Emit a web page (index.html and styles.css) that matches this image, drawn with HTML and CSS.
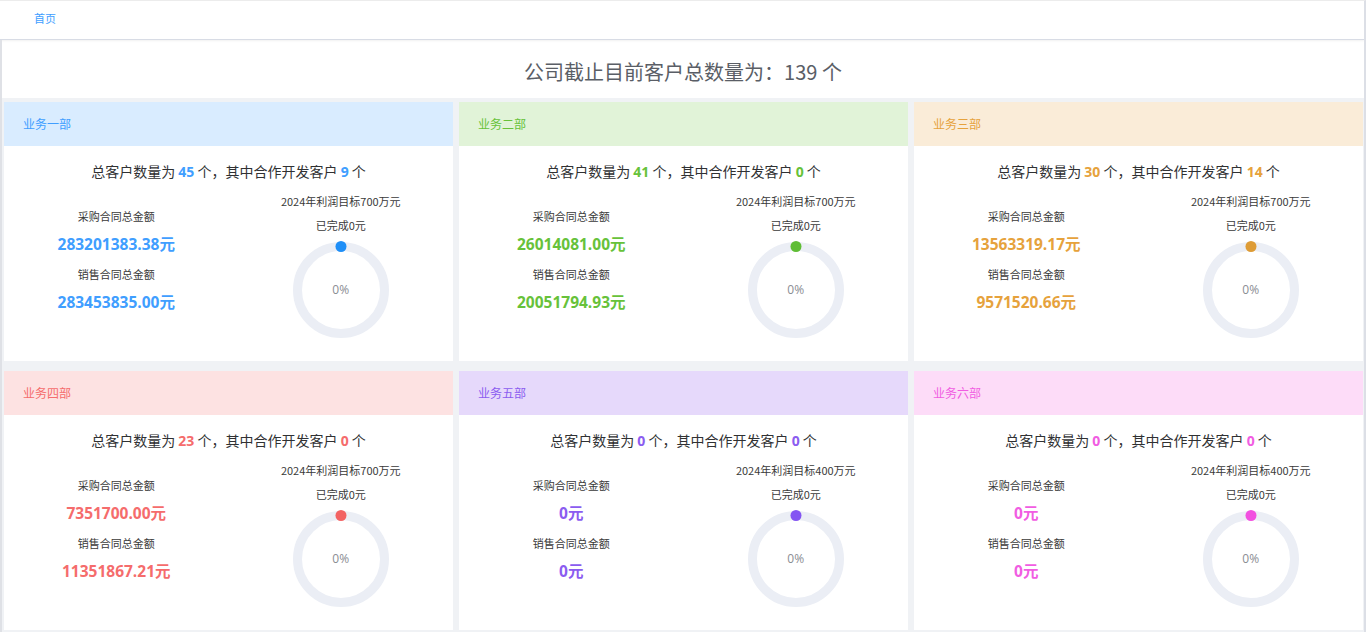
FILE: index.html
```html
<!DOCTYPE html>
<html lang="zh-CN">
<head>
<meta charset="utf-8">
<title>客户统计</title>
<link rel="stylesheet" href="styles.css">
</head>
<body>
<div class="app">
  <div class="topbar"><a class="crumb">首页</a></div>
  <div class="main">
    <div class="title">公司截止目前客户总数量为：139 个</div>
    <div class="grid">
      <div class="card c1">
        <div class="card-head">业务一部</div>
        <div class="card-body">
          <div class="summary">总客户数量为 <b>45</b> 个，其中合作开发客户 <b>9</b> 个</div>
          <div class="stats">
            <div class="amounts">
              <div class="label">采购合同总金额</div>
              <div class="value">283201383.38元</div>
              <div class="label">销售合同总金额</div>
              <div class="value">283453835.00元</div>
            </div>
            <div class="target">
              <div class="label">2024年利润目标700万元</div>
              <div class="label done">已完成0元</div>
              <div class="donut">
                <svg width="98" height="98" viewBox="0 0 98 98"><circle cx="49" cy="49" r="43.5" class="ring"/><circle cx="49" cy="5.5" r="5.5" class="dot"/></svg>
                <span class="pct">0%</span>
              </div>
            </div>
          </div>
        </div>
      </div>
      <div class="card c2">
        <div class="card-head">业务二部</div>
        <div class="card-body">
          <div class="summary">总客户数量为 <b>41</b> 个，其中合作开发客户 <b>0</b> 个</div>
          <div class="stats">
            <div class="amounts">
              <div class="label">采购合同总金额</div>
              <div class="value">26014081.00元</div>
              <div class="label">销售合同总金额</div>
              <div class="value">20051794.93元</div>
            </div>
            <div class="target">
              <div class="label">2024年利润目标700万元</div>
              <div class="label done">已完成0元</div>
              <div class="donut">
                <svg width="98" height="98" viewBox="0 0 98 98"><circle cx="49" cy="49" r="43.5" class="ring"/><circle cx="49" cy="5.5" r="5.5" class="dot"/></svg>
                <span class="pct">0%</span>
              </div>
            </div>
          </div>
        </div>
      </div>
      <div class="card c3">
        <div class="card-head">业务三部</div>
        <div class="card-body">
          <div class="summary">总客户数量为 <b>30</b> 个，其中合作开发客户 <b>14</b> 个</div>
          <div class="stats">
            <div class="amounts">
              <div class="label">采购合同总金额</div>
              <div class="value">13563319.17元</div>
              <div class="label">销售合同总金额</div>
              <div class="value">9571520.66元</div>
            </div>
            <div class="target">
              <div class="label">2024年利润目标700万元</div>
              <div class="label done">已完成0元</div>
              <div class="donut">
                <svg width="98" height="98" viewBox="0 0 98 98"><circle cx="49" cy="49" r="43.5" class="ring"/><circle cx="49" cy="5.5" r="5.5" class="dot"/></svg>
                <span class="pct">0%</span>
              </div>
            </div>
          </div>
        </div>
      </div>
      <div class="card c4">
        <div class="card-head">业务四部</div>
        <div class="card-body">
          <div class="summary">总客户数量为 <b>23</b> 个，其中合作开发客户 <b>0</b> 个</div>
          <div class="stats">
            <div class="amounts">
              <div class="label">采购合同总金额</div>
              <div class="value">7351700.00元</div>
              <div class="label">销售合同总金额</div>
              <div class="value">11351867.21元</div>
            </div>
            <div class="target">
              <div class="label">2024年利润目标700万元</div>
              <div class="label done">已完成0元</div>
              <div class="donut">
                <svg width="98" height="98" viewBox="0 0 98 98"><circle cx="49" cy="49" r="43.5" class="ring"/><circle cx="49" cy="5.5" r="5.5" class="dot"/></svg>
                <span class="pct">0%</span>
              </div>
            </div>
          </div>
        </div>
      </div>
      <div class="card c5">
        <div class="card-head">业务五部</div>
        <div class="card-body">
          <div class="summary">总客户数量为 <b>0</b> 个，其中合作开发客户 <b>0</b> 个</div>
          <div class="stats">
            <div class="amounts">
              <div class="label">采购合同总金额</div>
              <div class="value">0元</div>
              <div class="label">销售合同总金额</div>
              <div class="value">0元</div>
            </div>
            <div class="target">
              <div class="label">2024年利润目标400万元</div>
              <div class="label done">已完成0元</div>
              <div class="donut">
                <svg width="98" height="98" viewBox="0 0 98 98"><circle cx="49" cy="49" r="43.5" class="ring"/><circle cx="49" cy="5.5" r="5.5" class="dot"/></svg>
                <span class="pct">0%</span>
              </div>
            </div>
          </div>
        </div>
      </div>
      <div class="card c6">
        <div class="card-head">业务六部</div>
        <div class="card-body">
          <div class="summary">总客户数量为 <b>0</b> 个，其中合作开发客户 <b>0</b> 个</div>
          <div class="stats">
            <div class="amounts">
              <div class="label">采购合同总金额</div>
              <div class="value">0元</div>
              <div class="label">销售合同总金额</div>
              <div class="value">0元</div>
            </div>
            <div class="target">
              <div class="label">2024年利润目标400万元</div>
              <div class="label done">已完成0元</div>
              <div class="donut">
                <svg width="98" height="98" viewBox="0 0 98 98"><circle cx="49" cy="49" r="43.5" class="ring"/><circle cx="49" cy="5.5" r="5.5" class="dot"/></svg>
                <span class="pct">0%</span>
              </div>
            </div>
          </div>
        </div>
      </div>
    </div>
  </div>
</div>
</body>
</html>
```
FILE: styles.css
```css
* { box-sizing: border-box; }
html, body { margin: 0; padding: 0; background: #ffffff; }
body {
  font-family: "Noto Sans CJK SC", "Noto Sans", sans-serif;
  color: #303133;
  overflow: hidden;
}
.app {
  width: 1366px;
  height: 632px;
  border-right: 2px solid #dcdfe6;
  border-top: 1px solid #ececec;
  overflow: hidden;
}
.topbar {
  height: 39px;
  border-bottom: 1px solid #d8dce5;
  box-shadow: 0 1px 2px rgba(0, 0, 0, 0.06);
  padding-left: 34px;
  display: flex;
  align-items: center;
  padding-bottom: 4px;
}
.crumb {
  font-size: 11px;
  color: #409eff;
  line-height: 16px;
}
.main {
  border-left: 2px solid #dfe1e6;
}
.title {
  height: 58px;
  display: flex;
  align-items: center;
  justify-content: center;
  padding-top: 5px;
  font-size: 20px;
  color: #5a5e66;
  font-family: "Noto Sans CJK SC", sans-serif;
}
.grid {
  background: #f0f2f5;
  padding: 4px 1px 4px 2px;
  display: grid;
  grid-template-columns: repeat(3, 1fr);
  grid-template-rows: 259px 259px;
  column-gap: 6px;
  row-gap: 10px;
}
.card {
  background: #ffffff;
}
.card-head {
  height: 44px;
  line-height: 44px;
  padding-left: 19px;
  font-size: 12px;
}
.card-body {
  padding-top: 15px;
}
.summary {
  text-align: center;
  font-size: 14px;
  line-height: 20px;
  color: #303133;
}
.summary b {
  font-family: "Open Sans", "Noto Sans CJK SC", sans-serif;
  font-weight: 700;
}
.stats {
  display: flex;
  align-items: flex-start;
}
.amounts, .target {
  width: 50%;
  display: flex;
  flex-direction: column;
  align-items: center;
}
.amounts {
  margin-top: 26px;
}
.target {
  margin-top: 11px;
}
.label {
  font-size: 11px;
  line-height: 16px;
  color: #3a3a3a;
}
.amounts .label { margin-bottom: 10px; }
.value {
  font-family: "Open Sans", "Noto Sans CJK SC", sans-serif;
  font-weight: 700;
  font-size: 15.5px;
  line-height: 20px;
  margin-bottom: 12px;
}
.target .label { margin-bottom: 8px; }
.target .done { margin-bottom: 8px; }
.donut {
  position: relative;
  width: 98px;
  height: 98px;
}
.donut svg { display: block; }
.ring {
  fill: none;
  stroke: #ebeef5;
  stroke-width: 9;
}
.pct {
  position: absolute;
  left: 0;
  right: 0;
  top: 40px;
  text-align: center;
  font-size: 12px;
  line-height: 18px;
  color: #8a8d93;
  font-family: "Open Sans", sans-serif;
}

.c1 .card-head { background: #d9ecff; color: #409eff; }
.c1 b, .c1 .value { color: #409eff; }
.c1 .dot { fill: #1f8ff7; }

.c2 .card-head { background: #e1f3d8; color: #67c23a; }
.c2 b, .c2 .value { color: #67c23a; }
.c2 .dot { fill: #5fbd35; }

.c3 .card-head { background: #faecd8; color: #e6a23c; }
.c3 b, .c3 .value { color: #e6a23c; }
.c3 .dot { fill: #de9c36; }

.c4 .card-head { background: #fde2e2; color: #f56c6c; }
.c4 b, .c4 .value { color: #f56c6c; }
.c4 .dot { fill: #f36363; }

.c5 .card-head { background: #e6d9fb; color: #8b5cf0; }
.c5 b, .c5 .value { color: #8b5cf0; }
.c5 .dot { fill: #8455f2; }

.c6 .card-head { background: #fddcf8; color: #f15ce2; }
.c6 b, .c6 .value { color: #f15ce2; }
.c6 .dot { fill: #f250e0; }
```
